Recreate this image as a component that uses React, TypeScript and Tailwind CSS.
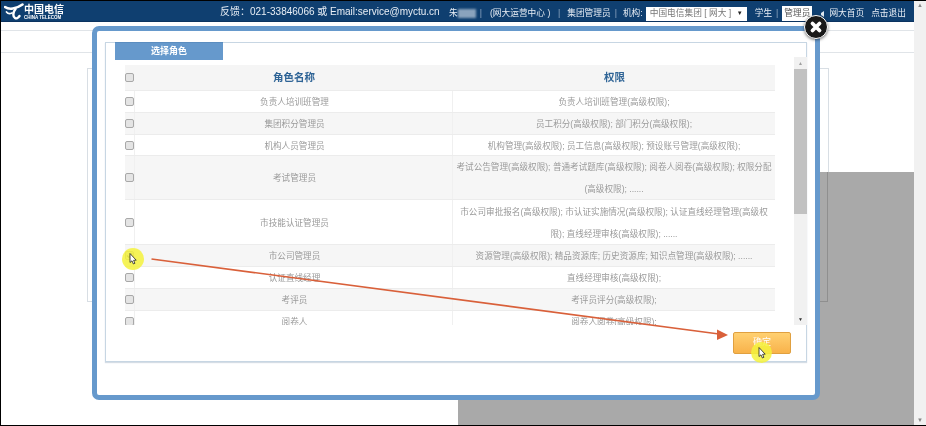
import React from 'react';

const rows = [
  { h: 'h-[22px]', name: '负责人培训班管理', perm: ['负责人培训班管理(高级权限);'] },
  { h: 'h-[22px]', name: '集团积分管理员', perm: ['员工积分(高级权限); 部门积分(高级权限);'] },
  { h: 'h-[21px]', name: '机构人员管理员', perm: ['机构管理(高级权限); 员工信息(高级权限); 预设账号管理(高级权限);'] },
  { h: 'h-[44px]', name: '考试管理员', perm: ['考试公告管理(高级权限); 普通考试题库(高级权限); 阅卷人阅卷(高级权限); 权限分配', '(高级权限); ......'] },
  { h: 'h-[45px]', name: '市技能认证管理员', perm: ['市公司审批报名(高级权限); 市认证实施情况(高级权限); 认证直线经理管理(高级权', '限); 直线经理审核(高级权限); ......'] },
  { h: 'h-[22px]', name: '市公司管理员', perm: ['资源管理(高级权限); 精品资源库; 历史资源库; 知识点管理(高级权限); ......'], checked: true },
  { h: 'h-[22px]', name: '认证直线经理', perm: ['直线经理审核(高级权限);'] },
  { h: 'h-[22px]', name: '考评员', perm: ['考评员评分(高级权限);'] },
  { h: 'h-[22px]', name: '阅卷人', perm: ['阅卷人阅卷(高级权限);'] },
];

const Check = ({ checked }: { checked?: boolean }) => (
  <span className="flex items-center justify-center w-[9px] h-[9px] rounded-[2px] border border-[#a8a8a8] bg-[#e4e4e4]">
    {checked && (
      <svg width="7" height="7" viewBox="0 0 7 7">
        <path d="M1 3.5 L3 5.5 L6 1" fill="none" stroke="#666" strokeWidth="1.2" />
      </svg>
    )}
  </span>
);

const Cursor = () => (
  <svg width="8" height="12" viewBox="0 0 8 12">
    <path d="M1 0.5 L1 9.5 L3 7.8 L4.4 11 L5.9 10.3 L4.6 7.3 L7.2 7.2 Z" fill="#fff" stroke="#222" strokeWidth="0.8" />
  </svg>
);

export default function App() {
  return (
    <div className="relative w-[926px] h-[426px] overflow-hidden bg-white border-y border-l border-black blur-[0.35px] font-['Liberation_Sans','Noto_Sans_CJK_SC',sans-serif]">
      <div className="flex h-[21px] items-end bg-[#0f3f70] text-[#e8eef5] border-b border-[#0b3360]">
        <div className="flex items-center self-center w-[219px] pl-[3px] shrink-0">
          <svg width="20" height="17" viewBox="0 0 20 17" fill="none">
            <path d="M1 4 C5 7 12 6 18.5 1.5" stroke="#fff" strokeWidth="2.6" strokeLinecap="round" />
            <path d="M11.5 6 C9 9 8.5 13.5 11 15 C12.5 16 14.5 14.5 15.5 13" stroke="#fff" strokeWidth="2.4" strokeLinecap="round" />
            <path d="M2.5 9 C4 11 6 11 8 10" stroke="#fff" strokeWidth="1.8" strokeLinecap="round" />
          </svg>
          <div className="flex flex-col leading-none mt-[2px]">
            <span className="text-[10px] font-bold text-white leading-[11px]">中国电信</span>
            <span className="text-[4.5px] font-bold text-white leading-[5px]">CHINA TELECOM</span>
          </div>
        </div>
        <span className="text-[10px] leading-[14px] mb-[2px] whitespace-nowrap w-[229px] shrink-0">反馈：021-33846066 或 Email:service@myctu.cn</span>
        <div className="flex items-center h-[15px] text-[8.7px] whitespace-nowrap">
          <span>朱</span>
          <span className="inline-block w-[18px] h-[9px] bg-[#8aa3bd] blur-[1px]" />
          <span className="ml-[4px] text-[#8fa8c2]">|</span>
          <span className="ml-[8px] w-[68px]">(网大运营中心 )</span>
          <span className="text-[#8fa8c2]">|</span>
          <span className="ml-[7px]">集团管理员</span>
          <span className="ml-[4px] text-[#8fa8c2]">|</span>
          <span className="ml-[6px]">机构:</span>
          <span className="ml-[3px] flex items-center justify-between w-[101px] h-[14px] bg-white text-[#777] px-[4px]">
            中国电信集团 [ 网大 ]<span className="text-[6px] text-[#222]">▼</span>
          </span>
          <span className="ml-[8px]">学生</span>
          <span className="ml-[4px] text-[#8fa8c2]">|</span>
          <span className="ml-[4px] flex items-center h-[15px] bg-white text-[#555] px-[2px]">管理员</span>
          <svg className="ml-[8px]" width="6" height="8" viewBox="0 0 6 8">
            <path d="M1 3 L4 1 L4 7 L1 5 Z" fill="#dfe7ef" />
          </svg>
          <span className="ml-[3px]">网大首页</span>
          <span className="ml-[7px]">点击退出</span>
        </div>
      </div>

      {/* page behind the modal */}
      <div className="mr-[11px] h-[403px]">
        <div className="mt-[8px] h-[23px] border-y border-r border-[#e0e4e8]" />
        <div className="mt-[15px] ml-[86px] mr-[86px] h-[234px] border border-[#d8dee4]" />
      </div>

      {/* page scrollbar */}
      <div className="absolute right-0 top-0 bottom-0 w-[12px] bg-[#f1f1f1] flex flex-col items-center justify-between text-[6px] text-[#888]">
        <span>▲</span>
        <span>▼</span>
      </div>

      {/* grey block below */}
      <div className="absolute left-[457px] right-[12px] top-[171px] bottom-0 bg-[#a9a9a9]">
        <div className="absolute right-[86px] top-0 h-[130px] w-[8px] border-r border-b border-[#8f8f8f]" />
      </div>

      {/* modal */}
      <div className="absolute left-[91px] top-[25px] w-[728px] h-[374px] bg-white border-[5px] border-[#6699cc] rounded-[7px] pl-[8px] pt-[11px]">
        <div className="relative h-[320px] w-[702px] border border-[#c7d6e3] shadow-[0_1px_1px_#d5dde5]">
          <div className="absolute left-[9px] -top-px w-[108px] h-[18px] flex items-center justify-center bg-[#6699cc] border-t border-[#5b8dbf] text-white text-[9px] font-bold">
            选择角色
          </div>
          <div className="absolute left-[19px] top-[22px] w-[650px] h-[260px] overflow-hidden text-[8.6px] text-[#9a9a9a]">
            <div className="flex h-[26px] bg-[#f5f5f5] border-b border-[#ececec] items-center text-[#2f6496] font-bold text-[10.5px]">
              <div className="w-[9px] flex justify-center"><Check /></div>
              <div className="w-[321px] text-center">角色名称</div>
              <div className="w-[322px] text-center">权限</div>
            </div>
            {rows.map((row, i) => (
              <div key={i} className={`flex items-stretch border-b border-[#ececec] ${row.h} ${i % 2 === 1 ? 'bg-[#f6f6f6]' : 'bg-white'}`}>
                <div className="w-[10px] shrink-0 flex items-center border-r border-[#f0f0f0]"><Check checked={row.checked} /></div>
                <div className="w-[318px] shrink-0 flex items-center justify-center pt-[2px] pl-[2px] border-r border-[#f0f0f0]">{row.name}</div>
                <div className="w-[322px] shrink-0 flex flex-col items-center justify-center pt-[1px] whitespace-nowrap">
                  {row.perm.map((line) => (
                    <span key={line} className="leading-[22px]">{line}</span>
                  ))}
                </div>
              </div>
            ))}
          </div>
          {/* inner scrollbar */}
          <div className="absolute left-[688px] top-[14px] w-[13px] h-[268px] bg-[#f1f1f1] flex flex-col items-center">
            <span className="h-[12px] text-[5px] leading-[12px] text-[#a0a0a0]">▲</span>
            <div className="w-full h-[145px] bg-[#c1c1c1]" />
            <span className="mt-auto h-[12px] text-[5px] leading-[12px] text-[#333]">▼</span>
          </div>
          <button className="absolute left-[627px] top-[289px] w-[58px] h-[22px] rounded-[2px] border border-[#e0a040] bg-gradient-to-b from-[#ffd071] to-[#f8b24a] text-white text-[9px]">
            确定
          </button>
        </div>
      </div>

      {/* close button */}
      <div className="absolute left-[803px] top-[14px] w-[24px] h-[24px] rounded-full bg-[#1a1a1a] border-[1.5px] border-white shadow-[0_1px_3px_rgba(0,0,0,0.5)] flex items-center justify-center">
        <svg width="14" height="14" viewBox="0 0 14 14">
          <path d="M3.5 3.5 L10.5 10.5 M10.5 3.5 L3.5 10.5" stroke="#fff" strokeWidth="3.8" strokeLinecap="round" />
        </svg>
      </div>

      {/* tutorial annotations */}
      <svg className="absolute left-0 top-0" width="926" height="426" viewBox="0 0 926 426">
        <line x1="150.5" y1="258" x2="718" y2="333" stroke="#d9603a" strokeWidth="1.6" />
        <path d="M727 334 L716 328.5 L716 339 Z" fill="#d9603a" />
      </svg>
      <div className="absolute left-[121px] top-[247px] w-[22px] h-[22px] rounded-full bg-[#f5f23c]/85 flex items-center justify-center">
        <Cursor />
      </div>
      <div className="absolute left-[750px] top-[341px] w-[21px] h-[21px] rounded-full bg-[#f5f23c]/85 flex items-center justify-center">
        <Cursor />
      </div>
    </div>
  );
}
